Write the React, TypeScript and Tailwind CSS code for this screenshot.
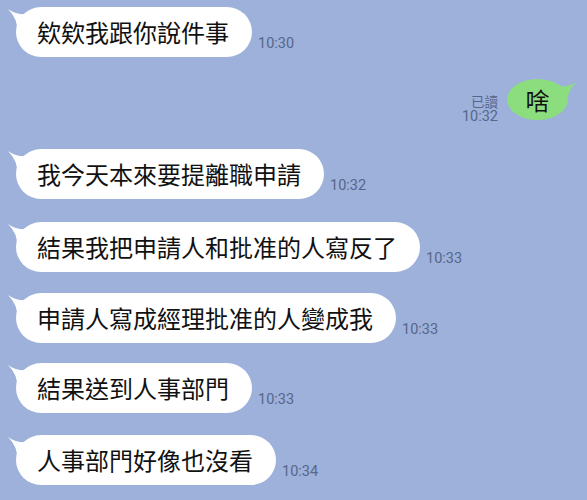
import React from "react";

const cjk = { fontFamily: '"Noto Sans CJK TC", "Noto Sans CJK SC", sans-serif' };
const ts = { fontFamily: 'Roboto, "Noto Sans CJK TC", sans-serif' };

function Tail() {
  return (
    <svg className="absolute left-[-9px] top-[0px]" width="24" height="26" viewBox="0 0 24 26">
      <path d="M1 2 Q 9 8 18 7 L 22 7 L 22 24 L 10 24 Q 11 12 1 2 Z" fill="#ffffff" />
    </svg>
  );
}

function Left({ text, time, mt }: { text: string; time: string; mt: string }) {
  return (
    <div className={`flex items-end ${mt}`}>
      <div className="relative ml-[16px]">
        <Tail />
        <div
          className="relative h-[50px] flex items-center rounded-[25px] bg-white pl-[21px] pr-[23px] text-[24px] leading-[30px] text-[#111111]"
          style={cjk}
        >
          {text}
        </div>
      </div>
      <div className="ml-[6px] mb-[5px] text-[14.5px] leading-[16px] text-[#58668a]" style={ts}>
        {time}
      </div>
    </div>
  );
}

export default function App() {
  return (
    <div className="w-[587px] h-[500px] overflow-hidden bg-[#9db1db] flex flex-col">
      <Left text="欸欸我跟你說件事" time="10:30" mt="mt-[7px]" />
      <div className="flex items-end justify-end mt-[22px] mr-[19px]">
        <div className="flex flex-col items-end mr-[9px] mb-[-5px] text-[14px] text-[#58668a]" style={ts}>
          <span className="block text-[13.5px] leading-[16px]" style={cjk}>已讀</span>
          <span className="block text-[14.5px] leading-[16px]">10:32</span>
        </div>
        <div className="relative">
          <svg className="absolute right-[-10px] top-[0px]" width="24" height="24" viewBox="0 0 24 24">
            <path d="M23 3 Q 15 8 6 7 L 2 7 L 2 22 L 14 22 Q 13 11 23 3 Z" fill="#8cdd7e" />
          </svg>
          <div
            className="relative w-[61px] h-[41px] flex items-center justify-center rounded-[50%] bg-[#8cdd7e] text-[24px] leading-[30px] text-[#111111]"
            style={cjk}
          >
            啥
          </div>
        </div>
      </div>
      <Left text="我今天本來要提離職申請" time="10:32" mt="mt-[29px]" />
      <Left text="結果我把申請人和批准的人寫反了" time="10:33" mt="mt-[23px]" />
      <Left text="申請人寫成經理批准的人變成我" time="10:33" mt="mt-[21px]" />
      <Left text="結果送到人事部門" time="10:33" mt="mt-[20px]" />
      <Left text="人事部門好像也沒看" time="10:34" mt="mt-[22px]" />
    </div>
  );
}
